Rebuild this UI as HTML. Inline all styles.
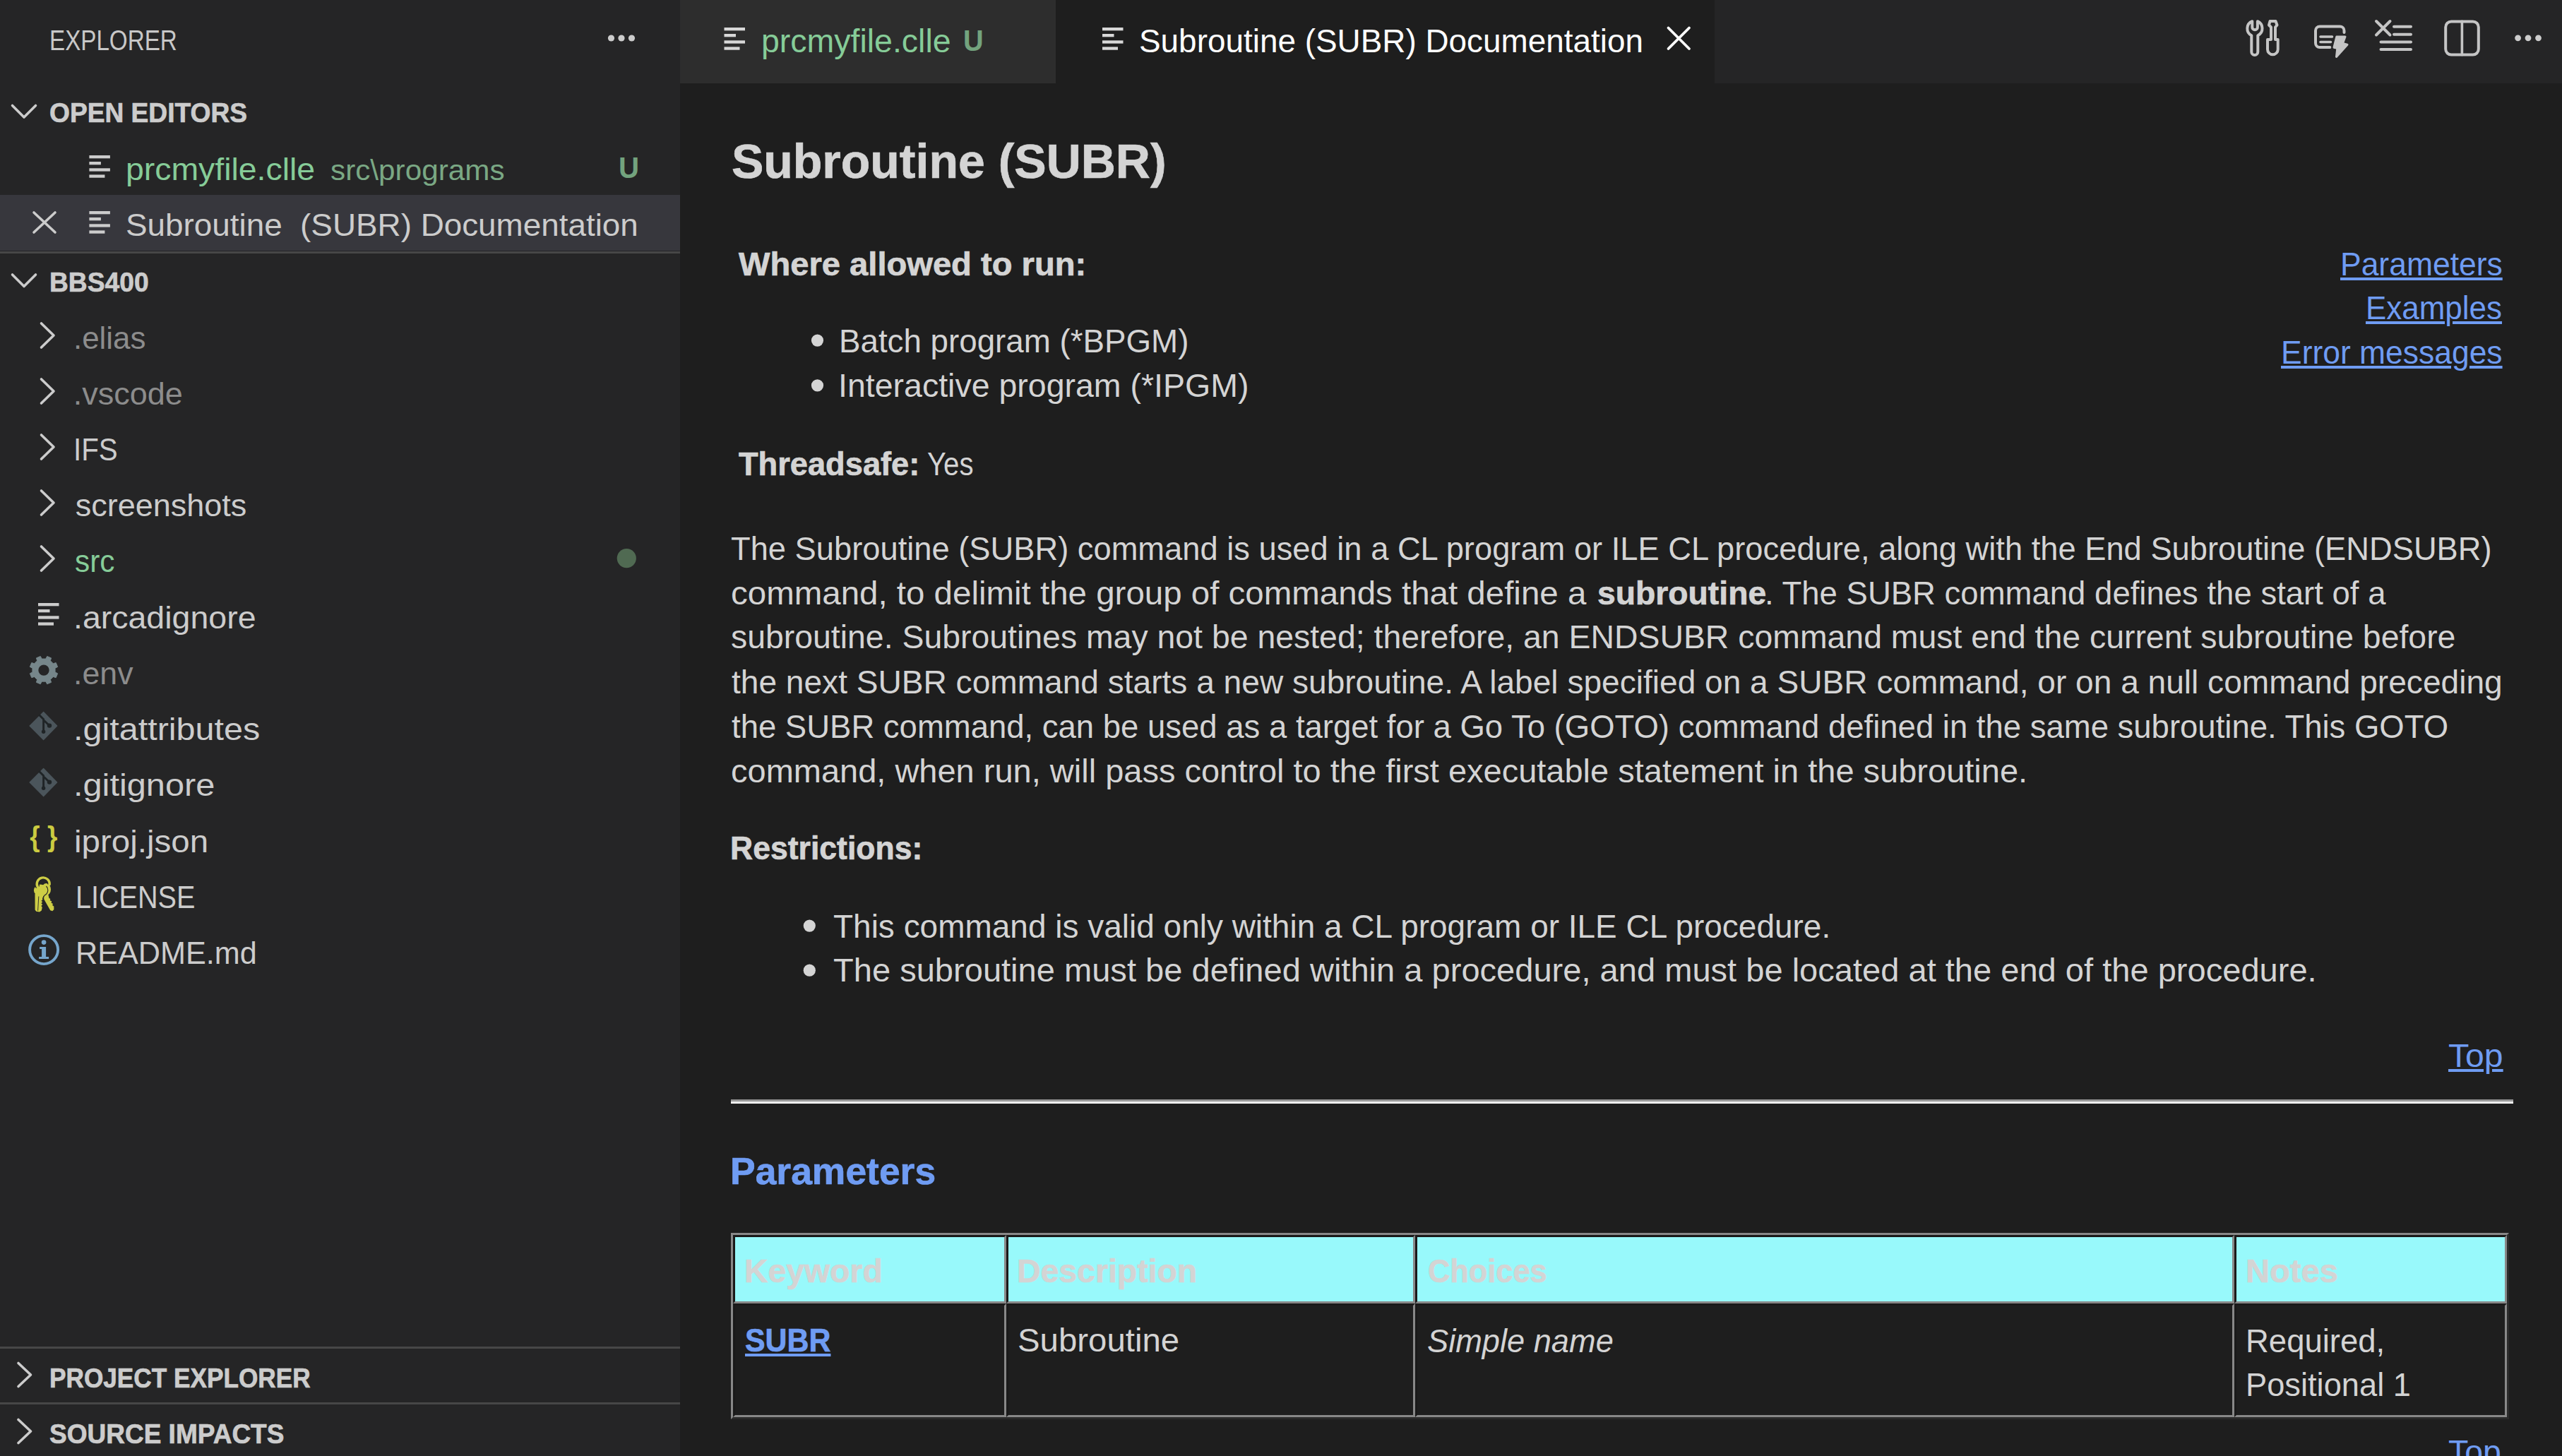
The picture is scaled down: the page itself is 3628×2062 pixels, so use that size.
<!DOCTYPE html>
<html><head><meta charset="utf-8"><style>
html,body{margin:0;padding:0;}
body{width:3628px;height:2062px;overflow:hidden;position:relative;background:#1e1e1e;font-family:'Liberation Sans', sans-serif;}
.t{position:absolute;white-space:pre;line-height:1;transform-origin:0 0;}
.r{position:absolute;}
svg{position:absolute;overflow:visible;}
</style></head><body>
<div class="r" style="left:0;top:0;width:963px;height:2062px;background:#252526"></div>
<div class="r" style="left:0;top:276px;width:963px;height:79px;background:#37373d"></div>
<div class="r" style="left:0;top:356px;width:963px;height:3px;background:#474747"></div>
<div class="r" style="left:0;top:1907px;width:963px;height:3px;background:#474747"></div>
<div class="r" style="left:0;top:1986px;width:963px;height:3px;background:#474747"></div>
<div class="r" style="left:963px;top:0;width:2665px;height:118px;background:#252526"></div>
<div class="r" style="left:963px;top:0;width:532px;height:118px;background:#2d2d2d"></div>
<div class="r" style="left:1495px;top:0;width:933px;height:118px;background:#1e1e1e"></div>
<!-- hr -->
<div class="r" style="left:1035px;top:1557px;width:2524px;height:3px;background:#9a9a9a"></div>
<div class="r" style="left:1035px;top:1560px;width:2524px;height:3px;background:#eeeeee"></div>
<!-- table -->
<div class="r" style="left:1035px;top:1746px;width:2512px;height:258px;border-style:solid;border-width:3px;border-color:#888 #2b2b2b #2b2b2b #888"></div>
<div class="r" style="left:1038px;top:1749px;width:381px;height:91px;border-style:solid;border-width:3px;border-color:#1a1a1a #888 #888 #1a1a1a;background:#98f9fb"></div>
<div class="r" style="left:1425px;top:1749px;width:573px;height:91px;border-style:solid;border-width:3px;border-color:#1a1a1a #888 #888 #1a1a1a;background:#98f9fb"></div>
<div class="r" style="left:2004px;top:1749px;width:1154px;height:91px;border-style:solid;border-width:3px;border-color:#1a1a1a #888 #888 #1a1a1a;background:#98f9fb"></div>
<div class="r" style="left:3164px;top:1749px;width:380px;height:91px;border-style:solid;border-width:3px;border-color:#1a1a1a #888 #888 #1a1a1a;background:#98f9fb"></div>
<div class="r" style="left:1038px;top:1846px;width:381px;height:155px;border-style:solid;border-width:3px;border-color:#1a1a1a #888 #888 #1a1a1a"></div>
<div class="r" style="left:1425px;top:1846px;width:573px;height:155px;border-style:solid;border-width:3px;border-color:#1a1a1a #888 #888 #1a1a1a"></div>
<div class="r" style="left:2004px;top:1846px;width:1154px;height:155px;border-style:solid;border-width:3px;border-color:#1a1a1a #888 #888 #1a1a1a"></div>
<div class="r" style="left:3164px;top:1846px;width:380px;height:155px;border-style:solid;border-width:3px;border-color:#1a1a1a #888 #888 #1a1a1a"></div>

<svg width="3628" height="2062" style="left:0;top:0">
 <defs>
  <g id="fileic"><rect x="0" y="0" width="29.5" height="4.3"/><rect x="0" y="9" width="16.5" height="4.3"/><rect x="0" y="18.3" width="29.5" height="4.3"/><rect x="0" y="27.4" width="22" height="4.3"/></g>
 </defs>
 <g fill="#d8d8d8">
  <use href="#fileic" x="1025.5" y="39"/>
  <use href="#fileic" x="1561" y="39"/>
 </g>
 <g fill="#cccccc">
  <use href="#fileic" x="126.4" y="220"/>
  <use href="#fileic" x="126.4" y="299"/>
  <use href="#fileic" x="54" y="854"/>
 </g>
 <g fill="none" stroke="#cccccc" stroke-width="3.6" stroke-linecap="round" stroke-linejoin="round">
  <polyline points="17.5,149.5 34,166 50.5,149.5"/>
  <polyline points="17.5,389 34,405.5 50.5,389"/>
  <polyline points="58.5,458 76,475 58.5,492"/>
  <polyline points="58.5,537 76,554 58.5,571"/>
  <polyline points="58.5,616 76,633 58.5,650"/>
  <polyline points="58.5,695 76,712 58.5,729"/>
  <polyline points="58.5,774 76,791 58.5,808"/>
  <polyline points="26,1930.5 43.5,1947 26,1963.5"/>
  <polyline points="26,2010.5 43.5,2027 26,2043.5"/>
  <path d="M48,301 L78,329 M78,301 L48,329"/>
 </g>
 <path d="M2362.5,39.5 L2392,69 M2392,39.5 L2362.5,69" fill="none" stroke="#ffffff" stroke-width="3.8" stroke-linecap="round"/>
 <g fill="#cccccc">
  <circle cx="865.5" cy="54" r="4.6"/><circle cx="880" cy="54" r="4.6"/><circle cx="894.5" cy="54" r="4.6"/>
  <circle cx="3565.6" cy="53.8" r="4.4"/><circle cx="3580" cy="53.8" r="4.4"/><circle cx="3594.5" cy="53.8" r="4.4"/>
 </g>
 <circle cx="887.3" cy="790.6" r="13.6" fill="#506a52"/>
 <!-- bullets -->
 <g fill="#d4d4d4">
  <circle cx="1157.5" cy="482.1" r="8.6"/><circle cx="1157.5" cy="545.8" r="8.6"/>
  <circle cx="1146.3" cy="1311.1" r="8.6"/><circle cx="1146.3" cy="1374.2" r="8.6"/>
 </g>
 <!-- gear -->
 <path d="M64.83,933.05 L66.72,929.46 L72.55,931.88 L71.35,935.75 L75.35,939.75 L79.22,938.55 L81.64,944.38 L78.05,946.27 L78.05,951.93 L81.64,953.82 L79.22,959.65 L75.35,958.45 L71.35,962.45 L72.55,966.32 L66.72,968.74 L64.83,965.15 L59.17,965.15 L57.28,968.74 L51.45,966.32 L52.65,962.45 L48.65,958.45 L44.78,959.65 L42.36,953.82 L45.95,951.93 L45.95,946.27 L42.36,944.38 L44.78,938.55 L48.65,939.75 L52.65,935.75 L51.45,931.88 L57.28,929.46 L59.17,933.05 Z" fill="#76868a" stroke="#76868a" stroke-width="1" stroke-linejoin="round"/>
 <circle cx="62" cy="949.1" r="7.7" fill="#252526"/>
 <!-- git diamonds -->
 <g id="git1">
  <polygon points="61.6,1008.6 80.6,1028 61.6,1047.4 42.2,1028" fill="#4b555b" stroke="#4b555b" stroke-width="1.4" stroke-linejoin="round"/>
  <path d="M55.3,1012.3 L62.3,1019.3 M61.6,1018.5 L61.6,1036.5 M62.5,1020.5 L69.5,1027.3" stroke="#1f2426" stroke-width="2.9" fill="none"/>
  <circle cx="61.6" cy="1036.2" r="2.7" fill="#1f2426"/>
  <circle cx="70" cy="1027.6" r="3.2" fill="#1f2426"/>
 </g>
 <use href="#git1" x="0" y="80"/>
 <!-- braces -->
 <text x="0" y="0" font-family="Liberation Sans" font-weight="700" font-size="41" fill="#cbcb41" text-anchor="middle" transform="translate(61.8,1198.5) scale(0.9,1)">{ }</text>
 <!-- keys -->
 <g fill="#cdcd45" stroke-linejoin="round">
  <ellipse cx="65.5" cy="1259.5" rx="6.5" ry="8.5"/>
  <path d="M62,1268 L68,1265.5 L69.5,1272 L71.3,1273 L70.8,1275.3 L73.2,1276.3 L72.6,1278.7 L74.8,1279.8 L74.3,1282.3 L76.3,1283.6 L76.4,1288 L74.3,1290.2 L71.2,1289.3 L62.3,1273.5 Z"/>
  <path d="M49.5,1266 L62.5,1266 L60.2,1272.5 L60.2,1274.3 L58.4,1275.7 L60.2,1277.3 L58.4,1279.2 L60.2,1281 L58.4,1283 L59.8,1285 L58.8,1289.5 L56,1291.6 L51.3,1290.8 L49.6,1288.4 Z"/>
  <ellipse cx="57.5" cy="1261" rx="9.6" ry="8.6"/>
  <path d="M65.5,1255 A9.6,8.6 0 0 1 63,1268 L60.6,1272.5" fill="none" stroke="#252526" stroke-width="1.1"/>
  <path d="M54.8,1269.5 L53.6,1289.8" stroke="#252526" stroke-width="0.9" fill="none"/>
  <path d="M53.5,1256.5 A9,9 0 1 1 70.2,1252.5" fill="none" stroke="#252526" stroke-width="6"/>
  <path d="M53.5,1256.5 A9,9 0 1 1 70.2,1252.5" fill="none" stroke="#cdcd45" stroke-width="3.4" stroke-linecap="round"/>
 </g>
 <!-- info -->
 <g transform="translate(62.1,1345.1)">
  <circle r="20" fill="none" stroke="#76a6cc" stroke-width="3.9"/>
  <circle cx="0" cy="-10.5" r="3.3" fill="#76a6cc"/>
  <path d="M-6,-4 L3,-4 L3,10 L7,10 L7,13 L-7,13 L-7,10 L-3,10 L-3,-1 L-6,-1 Z" fill="#76a6cc"/>
 </g>
 <!-- action icons -->
 <g fill="none" stroke="#c5c5c5" stroke-width="4" stroke-linecap="round" stroke-linejoin="round">
  <!-- wrench -->
  <path d="M3189.3,30.2 L3189.3,38.5 A3.8,3.8 0 0 0 3196.9,38.5 L3196.9,30.2 A11,11 0 0 1 3197.3,50.2 L3197.3,73.5 A4.5,4.5 0 0 1 3188.3,73.5 L3188.3,50.2 A11,11 0 0 1 3189.3,30.2 Z"/>
  <!-- screwdriver -->
  <path d="M3214.5,30 L3222.5,30 L3224.5,35.5 L3222,38.5 L3222,56 L3225.7,56 L3225.7,70 A7.35,7.35 0 0 1 3211,70 L3211,56 L3216,56 L3216,38.5 L3213,35.5 Z"/>
  <!-- card -->
  <path d="M3299.5,67 L3285,67 a6,6 0 0 1 -6,-6 L3279,43.5 a6,6 0 0 1 6,-6 L3313.5,37.5 a6,6 0 0 1 6,6 L3319.5,46"/>
  <path d="M3286,52 L3302.5,52 M3286,59.5 L3300.5,59.5" stroke-width="3.6"/>
  <!-- clear -->
  <path d="M3365,30 L3384.5,49.5 M3384.5,30 L3365,49.5 M3390,37.8 L3414,37.8 M3390,48.7 L3414,48.7 M3371.5,59.6 L3414,59.6 M3371.5,70.1 L3414,70.1"/>
  <!-- split -->
  <rect x="3463.2" y="30.4" width="46.6" height="47.2" rx="8"/>
  <path d="M3486.4,30.4 L3486.4,77.6" stroke-width="3.6"/>
 </g>
 <path d="M3308.8,52 L3321,52 L3317.5,61.5 L3324,63.2 L3308.5,80.5 L3309.8,68.4 L3305,67.2 Z" fill="#252526" stroke="#252526" stroke-width="7" stroke-linejoin="round"/>
 <path d="M3308.8,52 L3321,52 L3317.5,61.5 L3324,63.2 L3308.5,80.5 L3309.8,68.4 L3305,67.2 Z" fill="#c5c5c5" stroke="#c5c5c5" stroke-width="3" stroke-linejoin="round"/>
</svg>

<div class="t" style="left:69.5px;top:37.0px;font-size:40px;color:#c8c8c8;font-weight:400;font-style:normal;transform:scaleX(0.8296);">EXPLORER</div>
<div class="t" style="left:69.9px;top:140.4px;font-size:39px;color:#cccccc;font-weight:700;font-style:normal;transform:scaleX(0.9524);-webkit-text-stroke:0.7px currentColor;">OPEN EDITORS</div>
<div class="t" style="left:177.9px;top:217.2px;font-size:45px;color:#86cc98;font-weight:400;font-style:normal;transform:scaleX(1.0311);">prcmyfile.clle</div>
<div class="t" style="left:468.2px;top:220.7px;font-size:41px;color:#7aa884;font-weight:400;font-style:normal;transform:scaleX(1.0307);">src\programs</div>
<div class="t" style="left:875.5px;top:216.2px;font-size:43px;color:#73a37e;font-weight:700;font-style:normal;transform:scaleX(0.9370);">U</div>
<div class="t" style="left:178.0px;top:296.4px;font-size:45px;color:#cccccc;font-weight:400;font-style:normal;transform:scaleX(1.0182);">Subroutine  (SUBR) Documentation</div>
<div class="t" style="left:70.1px;top:379.6px;font-size:39px;color:#cccccc;font-weight:700;font-style:normal;transform:scaleX(0.9536);-webkit-text-stroke:0.7px currentColor;">BBS400</div>
<div class="t" style="left:103.8px;top:455.8px;font-size:45px;color:#8c8c8c;font-weight:400;font-style:normal;transform:scaleX(0.9744);">.elias</div>
<div class="t" style="left:103.7px;top:534.8px;font-size:45px;color:#8c8c8c;font-weight:400;font-style:normal;">.vscode</div>
<div class="t" style="left:104.1px;top:613.5px;font-size:45px;color:#cccccc;font-weight:400;font-style:normal;transform:scaleX(0.8954);">IFS</div>
<div class="t" style="left:106.7px;top:693.1px;font-size:45px;color:#cccccc;font-weight:400;font-style:normal;">screenshots</div>
<div class="t" style="left:106.4px;top:772.2px;font-size:45px;color:#86cc98;font-weight:400;font-style:normal;transform:scaleX(0.9404);">src</div>
<div class="t" style="left:104.1px;top:851.8px;font-size:45px;color:#cccccc;font-weight:400;font-style:normal;transform:scaleX(1.0333);">.arcadignore</div>
<div class="t" style="left:104.0px;top:930.8px;font-size:45px;color:#8c8c8c;font-weight:400;font-style:normal;transform:scaleX(0.9932);">.env</div>
<div class="t" style="left:103.9px;top:1009.8px;font-size:45px;color:#cccccc;font-weight:400;font-style:normal;transform:scaleX(1.0783);">.gitattributes</div>
<div class="t" style="left:103.9px;top:1089.2px;font-size:45px;color:#cccccc;font-weight:400;font-style:normal;transform:scaleX(1.0817);">.gitignore</div>
<div class="t" style="left:104.8px;top:1169.0px;font-size:45px;color:#cccccc;font-weight:400;font-style:normal;transform:scaleX(1.0556);">iproj.json</div>
<div class="t" style="left:107.0px;top:1247.5px;font-size:45px;color:#cccccc;font-weight:400;font-style:normal;transform:scaleX(0.8799);">LICENSE</div>
<div class="t" style="left:106.7px;top:1326.5px;font-size:45px;color:#cccccc;font-weight:400;font-style:normal;transform:scaleX(0.9600);">README.md</div>
<div class="t" style="left:70.4px;top:1931.8px;font-size:39px;color:#cccccc;font-weight:700;font-style:normal;transform:scaleX(0.9026);-webkit-text-stroke:0.7px currentColor;">PROJECT EXPLORER</div>
<div class="t" style="left:70.1px;top:2010.6px;font-size:39px;color:#cccccc;font-weight:700;font-style:normal;transform:scaleX(0.9489);-webkit-text-stroke:0.7px currentColor;">SOURCE IMPACTS</div>
<div class="t" style="left:1078.0px;top:34.9px;font-size:46px;color:#86cc98;font-weight:400;font-style:normal;transform:scaleX(1.0105);">prcmyfile.clle</div>
<div class="t" style="left:1364.1px;top:36.0px;font-size:43px;color:#73a37e;font-weight:700;font-style:normal;transform:scaleX(0.9259);">U</div>
<div class="t" style="left:1613.0px;top:34.9px;font-size:46px;color:#ffffff;font-weight:400;font-style:normal;transform:scaleX(0.9974);">Subroutine (SUBR) Documentation</div>
<div class="t" style="left:1035.9px;top:194.2px;font-size:68px;color:#d4d4d4;font-weight:700;font-style:normal;-webkit-text-stroke:0.7px currentColor;">Subroutine (SUBR)</div>
<div class="t" style="left:1046.0px;top:350.5px;font-size:46.5px;color:#d4d4d4;font-weight:700;font-style:normal;transform:scaleX(1.0133);-webkit-text-stroke:0.7px currentColor;">Where allowed to run:</div>
<div class="t" style="left:3313.6px;top:350.5px;font-size:46.5px;color:#6f9cf3;font-weight:400;font-style:normal;transform:scaleX(0.9560);text-decoration:underline;text-decoration-thickness:4px;text-underline-offset:3px;">Parameters</div>
<div class="t" style="left:3350.2px;top:413.4px;font-size:46.5px;color:#6f9cf3;font-weight:400;font-style:normal;transform:scaleX(0.9454);text-decoration:underline;text-decoration-thickness:4px;text-underline-offset:3px;">Examples</div>
<div class="t" style="left:3229.6px;top:476.3px;font-size:46.5px;color:#6f9cf3;font-weight:400;font-style:normal;transform:scaleX(0.9555);text-decoration:underline;text-decoration-thickness:4px;text-underline-offset:3px;">Error messages</div>
<div class="t" style="left:1188.1px;top:459.9px;font-size:46.5px;color:#d4d4d4;font-weight:400;font-style:normal;transform:scaleX(0.9831);">Batch program (*BPGM)</div>
<div class="t" style="left:1187.0px;top:523.0px;font-size:46.5px;color:#d4d4d4;font-weight:400;font-style:normal;">Interactive program (*IPGM)</div>
<div class="t" style="left:1046.4px;top:633.7px;font-size:46.5px;color:#d4d4d4;font-weight:700;font-style:normal;transform:scaleX(0.9723);-webkit-text-stroke:0.7px currentColor;">Threadsafe:</div>
<div class="t" style="left:1313.4px;top:633.7px;font-size:46.5px;color:#d4d4d4;font-weight:400;font-style:normal;transform:scaleX(0.8640);">Yes</div>
<div class="t" style="left:1035.4px;top:816.9px;font-size:46.5px;color:#d4d4d4;font-weight:400;font-style:normal;transform:scaleX(1.0210);">command, to delimit the group of commands that define a</div>
<div class="t" style="left:2262.2px;top:816.9px;font-size:46.5px;color:#d4d4d4;font-weight:700;font-style:normal;transform:scaleX(0.9955);-webkit-text-stroke:0.7px currentColor;">subroutine</div>
<div class="t" style="left:2499.1px;top:816.9px;font-size:46.5px;color:#d4d4d4;font-weight:400;font-style:normal;transform:scaleX(0.9787);">. The SUBR command defines the start of a</div>
<div class="t" style="left:1035.4px;top:754.1px;font-size:46.5px;color:#d4d4d4;font-weight:400;font-style:normal;transform:scaleX(0.9739);">The Subroutine (SUBR) command is used in a CL program or ILE CL procedure, along with the End Subroutine (ENDSUBR)</div>
<div class="t" style="left:1035.4px;top:879.4px;font-size:46.5px;color:#d4d4d4;font-weight:400;font-style:normal;transform:scaleX(0.9978);">subroutine. Subroutines may not be nested; therefore, an ENDSUBR command must end the current subroutine before</div>
<div class="t" style="left:1036.4px;top:942.5px;font-size:46.5px;color:#d4d4d4;font-weight:400;font-style:normal;transform:scaleX(0.9910);">the next SUBR command starts a new subroutine. A label specified on a SUBR command, or on a null command preceding</div>
<div class="t" style="left:1036.4px;top:1005.5px;font-size:46.5px;color:#d4d4d4;font-weight:400;font-style:normal;transform:scaleX(0.9781);">the SUBR command, can be used as a target for a Go To (GOTO) command defined in the same subroutine. This GOTO</div>
<div class="t" style="left:1035.4px;top:1068.5px;font-size:46.5px;color:#d4d4d4;font-weight:400;font-style:normal;transform:scaleX(1.0105);">command, when run, will pass control to the first executable statement in the subroutine.</div>
<div class="t" style="left:1034.0px;top:1178.3px;font-size:46.5px;color:#d4d4d4;font-weight:700;font-style:normal;transform:scaleX(0.9581);-webkit-text-stroke:0.7px currentColor;">Restrictions:</div>
<div class="t" style="left:1179.6px;top:1288.5px;font-size:46.5px;color:#d4d4d4;font-weight:400;font-style:normal;transform:scaleX(0.9887);">This command is valid only within a CL program or ILE CL procedure.</div>
<div class="t" style="left:1179.6px;top:1351.1px;font-size:46.5px;color:#d4d4d4;font-weight:400;font-style:normal;transform:scaleX(1.0120);">The subroutine must be defined within a procedure, and must be located at the end of the procedure.</div>
<div class="t" style="left:3466.7px;top:1471.5px;font-size:46.5px;color:#6f9cf3;font-weight:400;font-style:normal;transform:scaleX(1.0359);text-decoration:underline;text-decoration-thickness:4px;text-underline-offset:3px;">Top</div>
<div class="t" style="left:1034.2px;top:1632.0px;font-size:53px;color:#6f9cf3;font-weight:700;font-style:normal;transform:scaleX(1.0082);-webkit-text-stroke:0.7px currentColor;">Parameters</div>
<div class="t" style="left:1053.9px;top:1776.8px;font-size:46.5px;color:#d4d4d4;font-weight:700;font-style:normal;transform:scaleX(0.9965);-webkit-text-stroke:0.7px currentColor;">Keyword</div>
<div class="t" style="left:1439.8px;top:1776.8px;font-size:46.5px;color:#d4d4d4;font-weight:700;font-style:normal;transform:scaleX(0.9976);-webkit-text-stroke:0.7px currentColor;">Description</div>
<div class="t" style="left:2021.6px;top:1776.8px;font-size:46.5px;color:#d4d4d4;font-weight:700;font-style:normal;transform:scaleX(0.9324);-webkit-text-stroke:0.7px currentColor;">Choices</div>
<div class="t" style="left:3180.3px;top:1776.8px;font-size:46.5px;color:#d4d4d4;font-weight:700;font-style:normal;transform:scaleX(1.0126);-webkit-text-stroke:0.7px currentColor;">Notes</div>
<div class="t" style="left:1055.1px;top:1875.2px;font-size:46.5px;color:#6f9cf3;font-weight:700;font-style:normal;transform:scaleX(0.9218);-webkit-text-stroke:0.7px currentColor;text-decoration:underline;text-decoration-thickness:4px;text-underline-offset:3px;">SUBR</div>
<div class="t" style="left:1440.8px;top:1875.2px;font-size:46.5px;color:#d4d4d4;font-weight:400;font-style:normal;transform:scaleX(1.0187);">Subroutine</div>
<div class="t" style="left:2021.0px;top:1875.5px;font-size:46.5px;color:#d4d4d4;font-weight:400;font-style:italic;transform:scaleX(0.9721);">Simple name</div>
<div class="t" style="left:3180.4px;top:1875.6px;font-size:46.5px;color:#d4d4d4;font-weight:400;font-style:normal;transform:scaleX(0.9779);">Required,</div>
<div class="t" style="left:3180.4px;top:1937.9px;font-size:46.5px;color:#d4d4d4;font-weight:400;font-style:normal;transform:scaleX(0.9731);">Positional 1</div>
<div class="t" style="left:3467.0px;top:2032.5px;font-size:46.5px;color:#6f9cf3;font-weight:400;font-style:normal;text-decoration:underline;text-decoration-thickness:4px;text-underline-offset:3px;">Top</div>
</body></html>
